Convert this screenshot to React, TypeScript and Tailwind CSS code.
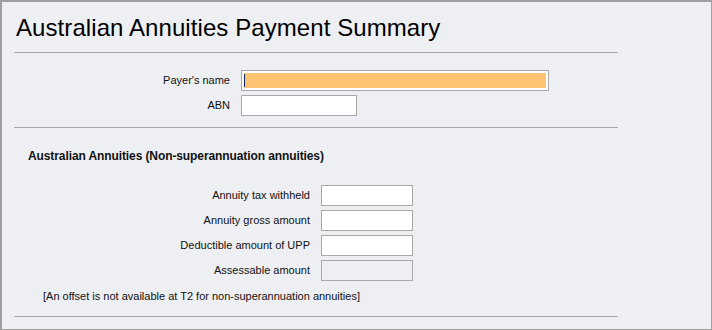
import React from "react";

const Field = ({ disabled }: { disabled?: boolean }) => (
  <div
    className={`w-[92px] h-[21px] border border-[#a9a9a9] ${
      disabled ? "bg-[#eeeff3]" : "bg-white"
    }`}
  />
);

const AmountRow = ({ label, disabled }: { label: string; disabled?: boolean }) => (
  <div className="flex items-center gap-[11px]">
    <span className="w-[296px] text-right text-[11px] leading-[13px] text-[#111]">{label}</span>
    <Field disabled={disabled} />
  </div>
);

const App = () => {
  return (
    <div
      className="w-[712px] h-[330px] bg-[#eeeff3] border-l-2 border-t-2 border-r border-b border-[#a0a0a0] overflow-hidden"
      style={{ fontFamily: '"Liberation Sans", Arial, sans-serif' }}
    >
      <div className="w-[616px] pl-[12px]">
        {/* Title */}
        <h1 className="pt-[12px] pl-[2px] text-[24px] leading-[28px] tracking-[0.08px] text-black font-normal">
          Australian Annuities Payment Summary
        </h1>
        <div className="mt-[10px] h-px bg-[#a8a8a8]" />

        {/* Payer details */}
        <div className="mt-[17px] flex flex-col gap-[4px]">
          <div className="flex items-center gap-[11px]">
            <span className="w-[216px] text-right text-[11px] leading-[13px] text-[#111]">Payer's name</span>
            <div className="w-[308px] h-[21px] border border-[#a9a9a9] bg-white p-[2px]">
              <div className="h-full bg-[#ffc374] flex items-center">
                <div className="w-px h-[13px] bg-[#0a246a]" />
              </div>
            </div>
          </div>
          <div className="flex items-center gap-[11px]">
            <span className="w-[216px] text-right text-[11px] leading-[13px] text-[#111]">ABN</span>
            <div className="w-[116px] h-[21px] border border-[#a9a9a9] bg-white" />
          </div>
        </div>
        <div className="mt-[11px] h-px bg-[#a8a8a8]" />

        {/* Annuities section */}
        <h2 className="mt-[21px] pl-[14px] text-[12px] leading-[14px] tracking-[-0.1px] font-bold text-[#111]">
          Australian Annuities (Non-superannuation annuities)
        </h2>
        <div className="mt-[22px] flex flex-col gap-[4px]">
          <AmountRow label="Annuity tax withheld" />
          <AmountRow label="Annuity gross amount" />
          <AmountRow label="Deductible amount of UPP" />
          <AmountRow label="Assessable amount" disabled />
        </div>
        <p className="mt-[9px] pl-[29px] text-[11px] leading-[13px] text-[#111]">
          [An offset is not available at T2 for non-superannuation annuities]
        </p>
        <div className="mt-[13px] h-px bg-[#a8a8a8]" />
      </div>
    </div>
  );
};

export default App;
